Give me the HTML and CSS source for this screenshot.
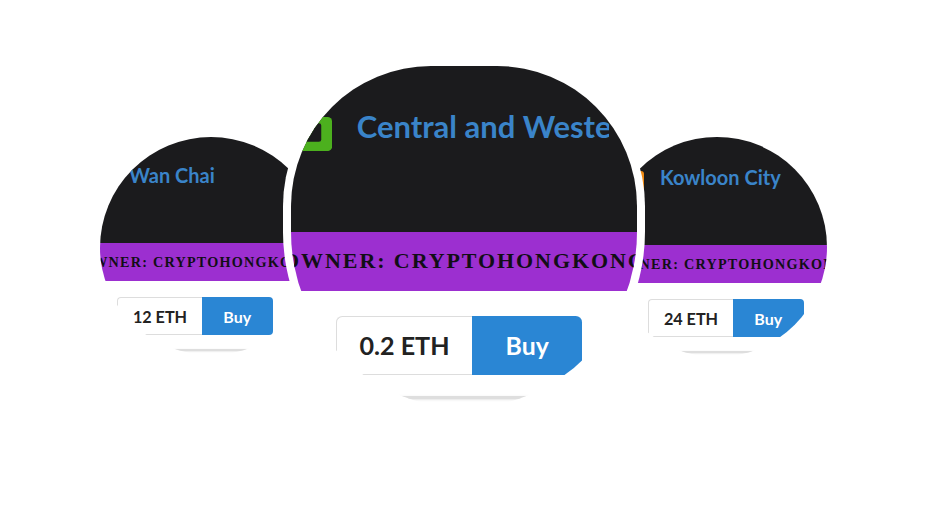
FILE: index.html
```html
<!DOCTYPE html>
<html lang="en">
<head>
<meta charset="utf-8">
<title>Districts</title>
<link rel="stylesheet" href="styles.css">
</head>
<body>
<div class="stage">
  <div class="bubble bubble-left">
    <div class="card">
      <div class="card-head">
        <span class="logo"><svg viewBox="0 0 22 22"><rect x="0" y="0" width="22" height="22" rx="3" fill="#d9442b"/><rect x="4" y="4" width="11" height="12" rx="1.5" fill="#1b1b1d"/></svg></span>
        <span class="district">Wan Chai</span>
      </div>
      <div class="owner"><span>OWNER: CRYPTOHONGKONG</span></div>
      <div class="purchase">
        <span class="price">12 ETH</span>
        <span class="buy">Buy</span>
      </div>
      <div class="card-foot"></div>
    </div>
  </div>
  <div class="bubble bubble-right">
    <div class="card">
      <div class="card-head">
        <span class="logo"><svg viewBox="0 0 22 22"><rect x="0" y="0" width="22" height="22" rx="3" fill="#f08a12"/><rect x="4" y="4" width="11" height="12" rx="1.5" fill="#1b1b1d"/></svg></span>
        <span class="district">Kowloon City</span>
      </div>
      <div class="owner"><span>OWNER: CRYPTOHONGKONG</span></div>
      <div class="purchase">
        <span class="price">24 ETH</span>
        <span class="buy">Buy</span>
      </div>
      <div class="card-foot"></div>
    </div>
  </div>
  <div class="bubble bubble-center">
    <div class="card">
      <div class="card-head">
        <span class="logo"><svg viewBox="0 0 22 22"><rect x="0" y="0" width="22" height="22" rx="3" fill="#4cb01e"/><rect x="4" y="4" width="11" height="12" rx="1.5" fill="#1b1b1d"/></svg></span>
        <span class="district">Central and Western</span>
      </div>
      <div class="owner"><span>OWNER: CRYPTOHONGKONG</span></div>
      <div class="purchase">
        <span class="price">0.2 ETH</span>
        <span class="buy">Buy</span>
      </div>
      <div class="card-foot"></div>
    </div>
  </div>
</div>
</body>
</html>
```
FILE: styles.css
```css
html, body {
  margin: 0;
  padding: 0;
  background: #ffffff;
}

.stage {
  position: relative;
  width: 927px;
  height: 521px;
  overflow: hidden;
  font-family: Lato, "Open Sans", sans-serif;
}

/* rounded "lens" crops placed on a free canvas */
.bubble {
  position: absolute;
  border-radius: 50%;
  overflow: hidden;
  background: #ffffff;
}

.bubble-left {
  left: 100px;
  top: 137px;
  width: 222px;
  height: 218px;
  border-radius: 111px / 111px 111px 107px 107px;
  font-size: 10px;
}

.bubble-right {
  left: 607px;
  top: 137px;
  width: 220px;
  height: 220px;
  font-size: 10px;
}

.bubble-center {
  left: 291px;
  top: 66px;
  width: 346px;
  height: 342px;
  border-radius: 140px 140px 173px 173px / 140px 140px 176px 176px;
  font-size: 15.5px;
  box-shadow: 0 0 0 8px #ffffff;
  z-index: 2;
}

.bubble-left .card {
  margin-left: -4.5em;
  margin-top: -1.4em;
}

.bubble-right .card {
  margin-left: -2.1em;
  margin-top: -1.2em;
}

.bubble-center .card {
  margin-left: -3.16em;
  margin-top: -1.29em;
}

.card {
  width: 28em;
}

.card-head {
  height: 12em;
  box-sizing: border-box;
  padding: 4em 0 0 3.6em;
  background: #1b1b1d;
  display: flex;
  align-items: flex-start;
  gap: 1.6em;
}

.logo {
  flex: none;
  width: 2.2em;
  height: 2.2em;
  margin-top: 0.6em;
}

.logo svg {
  display: block;
  width: 100%;
  height: 100%;
}

.district {
  font-size: 2em;
  line-height: 1.2;
  font-weight: 700;
  color: #3a84c9;
  white-space: nowrap;
  max-width: 8.15em;
  overflow: hidden;
}

.owner {
  height: 3.8em;
  box-sizing: border-box;
  padding-left: 0.7em;
  background: #9c2fd0;
  display: flex;
  align-items: center;
  justify-content: center;
}

.owner span {
  font-family: "Liberation Serif", "Times New Roman", serif;
  font-weight: 700;
  font-size: 1.42em;
  letter-spacing: 0.087em;
  color: #120e16;
  white-space: nowrap;
}

.purchase {
  display: flex;
  justify-content: center;
  margin-top: 1.6em;
  height: 3.8em;
}

.price {
  display: flex;
  align-items: center;
  font-size: 1.62em;
  font-weight: 700;
  color: #222222;
  padding: 0 0.9em;
  border: 0.06em solid #dddddd;
  border-right: 0;
  border-radius: 0.25em 0 0 0.25em;
  background: #ffffff;
  white-space: nowrap;
}

.buy {
  display: flex;
  align-items: center;
  justify-content: center;
  font-size: 1.6em;
  font-weight: 700;
  width: 4.44em;
  color: #ffffff;
  background: #2a86d4;
  border-radius: 0 0.25em 0.25em 0;
}

.card-foot {
  margin-top: 1.4em;
  height: 0.15em;
  background: #dedede;
  box-shadow: 0 0.05em 0.15em rgba(0, 0, 0, 0.12);
}
```
